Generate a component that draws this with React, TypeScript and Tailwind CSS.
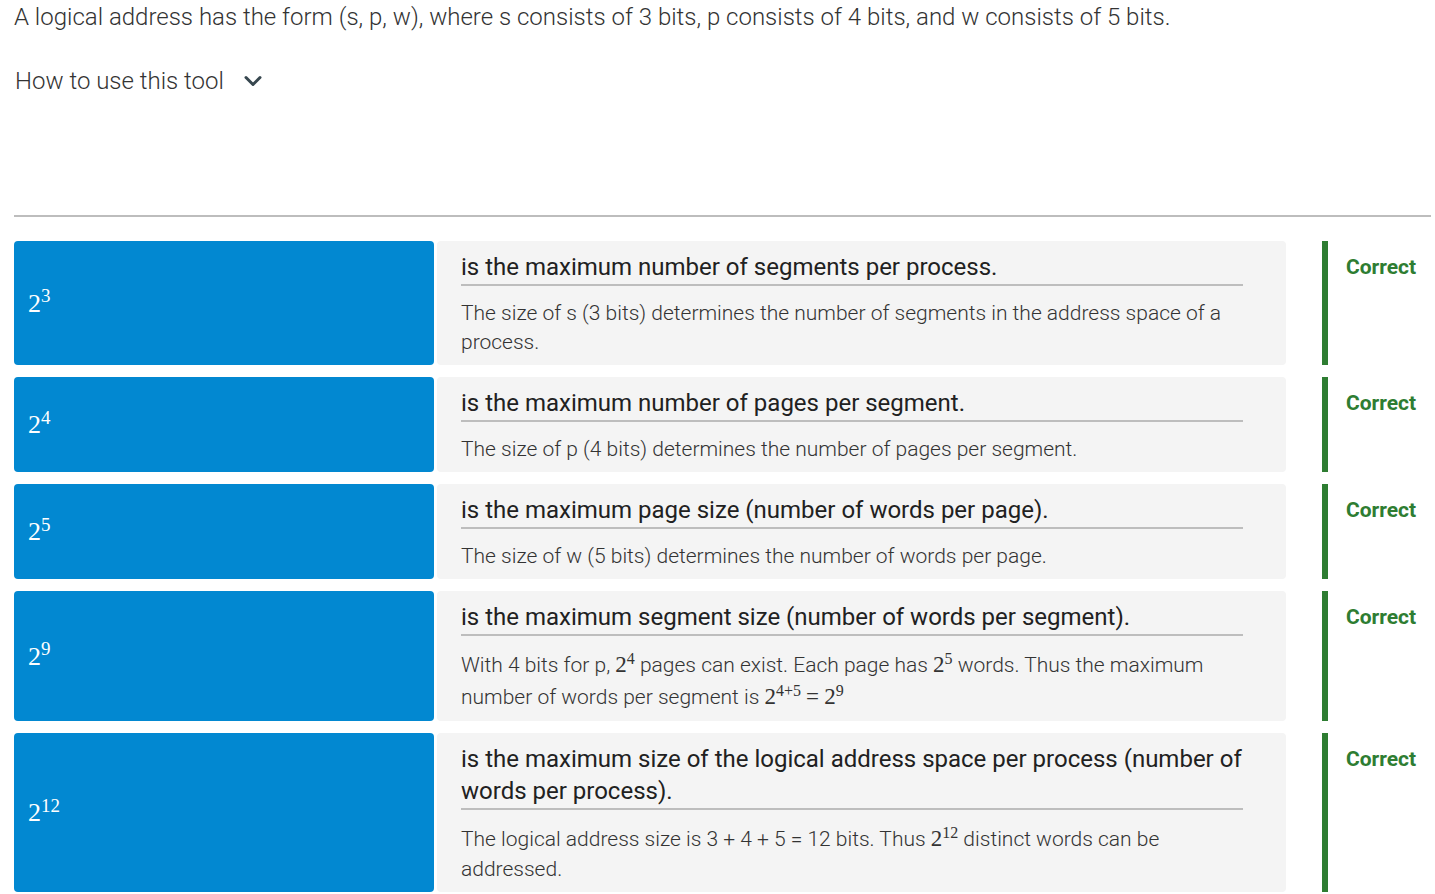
import React from 'react';

// Math bits use a serif stack to mimic the KaTeX rendering
const Pow: React.FC<{ base: string; exp: string; big?: boolean }> = ({ base, exp, big }) => (
  <span
    className={`font-['Liberation_Serif',serif] ${big ? 'text-[26px]' : 'text-[23px] leading-[32px]'} whitespace-nowrap`}
  >
    {base}
    <sup className={big ? 'text-[19px]' : 'text-[16px]'}>{exp}</sup>
  </span>
);

type Row = {
  exp: string;
  title: string;
  explain: React.ReactNode;
};

const ROWS: Row[] = [
  {
    exp: '3',
    title: 'is the maximum number of segments per process.',
    explain: 'The size of s (3 bits) determines the number of segments in the address space of a process.',
  },
  {
    exp: '4',
    title: 'is the maximum number of pages per segment.',
    explain: 'The size of p (4 bits) determines the number of pages per segment.',
  },
  {
    exp: '5',
    title: 'is the maximum page size (number of words per page).',
    explain: 'The size of w (5 bits) determines the number of words per page.',
  },
  {
    exp: '9',
    title: 'is the maximum segment size (number of words per segment).',
    explain: (
      <>
        With 4 bits for p, <Pow base="2" exp="4" /> pages can exist. Each page has <Pow base="2" exp="5" /> words. Thus the maximum
        number of words per segment is <Pow base="2" exp="4+5" />{' '}
        <span className="font-['Liberation_Serif',serif] text-[23px] leading-[32px]">=</span> <Pow base="2" exp="9" />
      </>
    ),
  },
  {
    exp: '12',
    title: 'is the maximum size of the logical address space per process (number of words per process).',
    explain: (
      <>
        The logical address size is 3 + 4 + 5 = 12 bits. Thus <Pow base="2" exp="12" /> distinct words can be addressed.
      </>
    ),
  },
];

const MatchRow: React.FC<{ row: Row }> = ({ row }) => (
  <div className="flex items-stretch">
    <div className="w-[420px] shrink-0 bg-[#0288d1] rounded-[4px] flex items-center pl-[14px] text-white">
      <Pow base="2" exp={row.exp} big />
    </div>
    <div className="w-[849px] shrink-0 ml-[3px] bg-[#f4f4f4] rounded-[4px] pl-[24px] pr-[43px] pt-[10px] pb-[8px]">
      <div className="text-[24px] leading-[32px] text-[#212121] border-b-2 border-[#bdbdbd] pb-[1px]">{row.title}</div>
      <div className="mt-[13px] text-[21px] leading-[29px] font-light text-[#333333]">{row.explain}</div>
    </div>
    <div className="ml-[36px] border-l-[6px] border-[#2e7d32] pl-[18px] pt-[10px]">
      <span className="text-[21px] leading-[32px] font-bold text-[#2e7d32]">Correct</span>
    </div>
  </div>
);

export default function App() {
  return (
    <div className="min-h-screen bg-white font-['Roboto',sans-serif] pl-[14px] pr-[4px]">
      <p className="pt-[1px] text-[24px] leading-[32px] font-light text-[#333333]">
        A logical address has the form (s, p, w), where s consists of 3 bits, p consists of 4 bits, and w consists of 5 bits.
      </p>
      <button className="mt-[32px] flex items-center gap-[19px] text-[24px] leading-[32px] font-light text-[#333333] pl-[1px]">
        <span>How to use this tool</span>
        <svg width="20" height="20" viewBox="0 0 20 20" fill="none">
          <polyline points="3,6.5 10,13.5 17,6.5" stroke="#37474f" strokeWidth="3" strokeLinecap="round" strokeLinejoin="round" />
        </svg>
      </button>
      <hr className="mt-[118px] border-t-2 border-[#bdbdbd]" />
      <div className="mt-[24px] flex flex-col gap-[12px]">
        {ROWS.map((r) => (
          <MatchRow key={r.exp} row={r} />
        ))}
      </div>
    </div>
  );
}
